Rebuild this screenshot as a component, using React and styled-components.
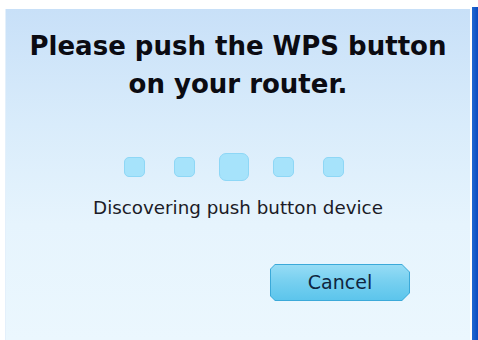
import React from 'react'
import styled, { createGlobalStyle } from 'styled-components'

const GlobalStyle = createGlobalStyle`
	html, body {
		margin: 0;
		padding: 0;
		background: #ffffff;
	}
	body {
		font-family: 'DejaVu Sans', Verdana, sans-serif;
	}
`

const Screen = styled.div`
	display: flex;
	width: 478px;
	height: 340px;
	overflow: hidden;
	background: #ffffff;
`

const Panel = styled.div`
	flex: 1;
	margin: 9px 0 0 5px;
	display: flex;
	flex-direction: column;
	align-items: center;
	background: linear-gradient(to bottom, #c8e0f8 0%, #d9ecfb 35%, #e6f4fd 65%, #ebf7fe 100%);
	border-left: 1px solid #e4f0fb;
`

const Edge = styled.div`
	width: 6px;
	margin: 7px 0 0 2px;
	background: linear-gradient(to right, #2068d2, #0b4bbf);
`

const Title = styled.h1`
	margin: 18px 0 0;
	font-size: 26px;
	line-height: 38px;
	font-weight: 700;
	color: #0b0b12;
	text-align: center;
`

const Dots = styled.div`
	display: flex;
	align-items: center;
	gap: 29px;
	height: 28px;
	margin-top: 50px;
	padding-right: 9px;
`

const Dot = styled.span`
	width: ${p => (p.big ? 30 : 21)}px;
	height: ${p => (p.big ? 28 : 20)}px;
	margin: 0 ${p => (p.big ? -5 : 0)}px;
	border-radius: ${p => (p.big ? 7 : 5)}px;
	background: #a6e3fb;
	border: 1px solid #8ed7f6;
	box-sizing: border-box;
`

const Status = styled.div`
	margin-top: 16px;
	font-size: 18.3px;
	line-height: 22px;
	color: #1b1b26;
`

const Actions = styled.div`
	align-self: stretch;
	display: flex;
	justify-content: flex-end;
	padding-right: 60px;
	margin-top: 45px;
`

const Button = styled.button`
	position: relative;
	width: 140px;
	height: 37px;
	padding: 0 0 2px;
	border: none;
	background: #3ba9d9;
	font-family: 'DejaVu Sans', Verdana, sans-serif;
	font-size: 19px;
	color: #0f2640;
	cursor: pointer;
	clip-path: polygon(5px 0, calc(100% - 8px) 0, 100% 8px, 100% calc(100% - 8px), calc(100% - 8px) 100%, 5px 100%, 0 calc(100% - 5px), 0 5px);
	&::before {
		content: '';
		position: absolute;
		inset: 1px;
		background: linear-gradient(to bottom, #96dcf5 0%, #78d0f0 45%, #5cc5ec 100%);
		clip-path: polygon(4px 0, calc(100% - 7px) 0, 100% 7px, 100% calc(100% - 7px), calc(100% - 7px) 100%, 4px 100%, 0 calc(100% - 4px), 0 4px);
	}
	span {
		position: relative;
	}
`

export default function App() {
	return (
		<>
			<GlobalStyle />
			<Screen>
				<Panel>
					<Title>
						Please push the WPS button
						<br />
						on your router.
					</Title>
					<Dots>
						<Dot />
						<Dot />
						<Dot big />
						<Dot />
						<Dot />
					</Dots>
					<Status>Discovering push button device</Status>
					<Actions>
						<Button>
							<span>Cancel</span>
						</Button>
					</Actions>
				</Panel>
				<Edge />
			</Screen>
		</>
	)
}
